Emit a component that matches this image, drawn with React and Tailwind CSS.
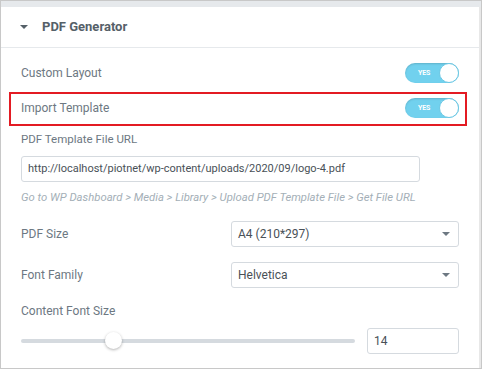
import React from "react";

function Toggle() {
  return (
    <div className="relative w-[54px] h-[20px] rounded-full bg-[#71d1ee] shadow-[inset_0_1px_2px_rgba(0,0,0,0.15)]">
      <span className="absolute left-[13px] top-[5px] text-[7px] leading-[10px] font-bold text-white tracking-tight">YES</span>
      <div className="absolute right-0 top-0 w-[20px] h-[20px] rounded-full bg-white border border-[#6cc8e4]" />
    </div>
  );
}

function Caret({ className }) {
  return (
    <svg width="8" height="4" viewBox="0 0 8 4" className={className}>
      <path d="M0 0 H8 L4 4 Z" fill="currentColor" />
    </svg>
  );
}

function Select({ value }) {
  return (
    <div className="w-[228px] h-[26px] border border-[#d5dadf] rounded-[3px] flex items-center justify-between pl-[6px] pr-[8px] text-[12px] text-[#495157]">
      <span>{value}</span>
      <Caret className="text-[#6d7882]" />
    </div>
  );
}

export default function App() {
  return (
    <div
      className="w-[482px] h-[369px] border border-[#c8c8c8] bg-[#e6e9ec] flex flex-col overflow-hidden"
      style={{ fontFamily: "Roboto, 'Liberation Sans', sans-serif" }}
    >
      <div className="h-[6px] shrink-0" />
      <div className="flex-1 flex bg-white">
        <div className="flex-1 flex flex-col">
          {/* Header */}
          <div className="h-[41px] border-b border-[#e6e9ec] flex items-center pl-[19px] gap-[14px] text-[#556068]">
            <Caret className="text-[#556068]" />
            <span className="text-[13px] font-bold">PDF Generator</span>
          </div>

          {/* Custom Layout */}
          <div className="mt-[15px] flex items-center justify-between pl-[20px] pr-[20px] h-[20px]">
            <span className="text-[12px] text-[#6d7882]">Custom Layout</span>
            <Toggle />
          </div>

          {/* Import Template (highlighted) */}
          <div className="mt-[9px] ml-[8px] w-[458px] border-2 border-[#e31b23] flex items-center justify-between pl-[10px] pr-[6px] pt-[4px] pb-[6px]">
            <span className="text-[12px] text-[#6d7882]">Import Template</span>
            <Toggle />
          </div>

          {/* PDF Template File URL */}
          <div className="px-[20px] mt-[6px]">
            <div className="text-[11.5px] leading-[15px] text-[#6d7882]">PDF Template File URL</div>
            <div className="mt-[9px] w-[399px] h-[26px] border border-[#d5dadf] rounded-[3px] flex items-center pl-[6px] text-[11px] text-[#495157]">
              http://localhost/piotnet/wp-content/uploads/2020/09/logo-4.pdf
            </div>
            <div className="mt-[9px] text-[11.3px] leading-[14px] italic text-[#a4afb7]">
              Go to WP Dashboard &gt; Media &gt; Library &gt; Upload PDF Template File &gt; Get File URL
            </div>
          </div>

          {/* PDF Size */}
          <div className="mt-[16px] px-[20px] flex items-center justify-between">
            <span className="text-[12px] text-[#6d7882]">PDF Size</span>
            <Select value="A4 (210*297)" />
          </div>

          {/* Font Family */}
          <div className="mt-[15px] px-[20px] flex items-center justify-between">
            <span className="text-[12px] text-[#6d7882]">Font Family</span>
            <Select value="Helvetica" />
          </div>

          {/* Content Font Size */}
          <div className="px-[20px] mt-[16px]">
            <div className="text-[12px] leading-[15px] text-[#6d7882]">Content Font Size</div>
            <div className="mt-[9px] flex items-center gap-[12px]">
              <div className="relative w-[334px] h-[4px] rounded-full bg-[#d5dadf]">
                <div className="absolute left-[84px] top-[-7px] w-[17px] h-[17px] rounded-full bg-white shadow-[0_1px_3px_rgba(0,0,0,0.3)]" />
              </div>
              <div className="w-[92px] h-[26px] border border-[#d5dadf] rounded-[3px] flex items-center pl-[6px] text-[12px] text-[#495157]">
                14
              </div>
            </div>
          </div>
        </div>
        <div className="w-[3px] bg-[#e8e8e8]" />
      </div>
    </div>
  );
}
